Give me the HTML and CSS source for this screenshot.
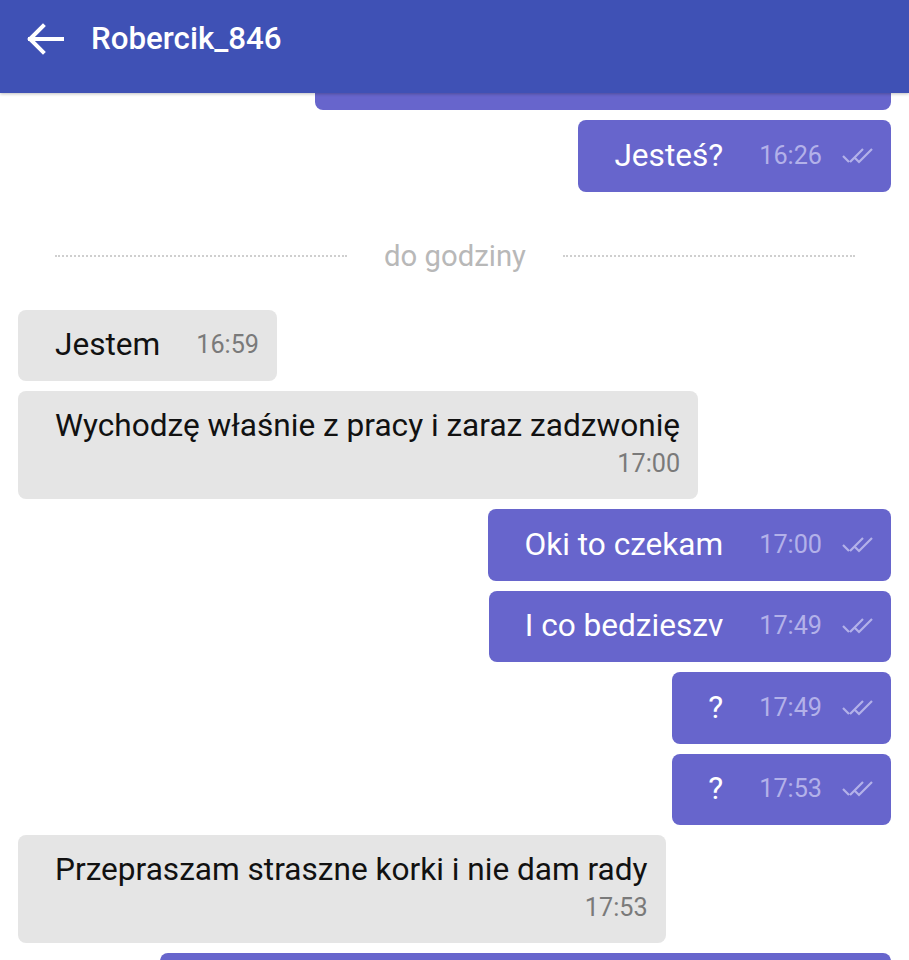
FILE: index.html
```html
<html>
<head>
    <meta charset="UTF-8">
    <meta name="viewport" content="width=device-width, initial-scale=1.0">
    <title>Robercik_846</title>
    <link rel="stylesheet" href="styles.css">
</head>

<body>
    <div class="topbar">
        <svg class="back" width="38" height="34" viewBox="0 0 38 34">
            <path d="M36 17H4M17 4L4 17l13 13" fill="none" stroke="white" stroke-width="4" stroke-linecap="square"/>
        </svg>
        <span class="title">Robercik_846</span>
    </div>

    <div id="messages">
        <div class="row out"><div class="bubble cut"></div></div>

        <div class="row out">
            <div class="bubble">
                <span class="text">Jesteś?</span>
                <span class="time">16:26</span>
                <svg class="ticks" width="32" height="18" viewBox="0 0 32 18"><path d="M2 9l6 6M9 15L22 2M14 11l4 4L31 2" fill="none" stroke="#b3b1e9" stroke-width="2.2"/></svg>
            </div>
        </div>

        <div class="divider">
            <span class="dots"></span>
            <span class="label">do godziny</span>
            <span class="dots"></span>
        </div>

        <div class="row in">
            <div class="bubble">
                <span class="text">Jestem</span>
                <span class="time">16:59</span>
            </div>
        </div>
        <div class="row in">
            <div class="bubble tall">
                <span class="text">Wychodzę właśnie z pracy i zaraz zadzwonię</span>
                <span class="time">17:00</span>
            </div>
        </div>

        <div class="row out">
            <div class="bubble">
                <span class="text">Oki to czekam</span>
                <span class="time">17:00</span>
                <svg class="ticks" width="32" height="18" viewBox="0 0 32 18"><path d="M2 9l6 6M9 15L22 2M14 11l4 4L31 2" fill="none" stroke="#b3b1e9" stroke-width="2.2"/></svg>
            </div>
        </div>
        <div class="row out">
            <div class="bubble">
                <span class="text">I co bedzieszv</span>
                <span class="time">17:49</span>
                <svg class="ticks" width="32" height="18" viewBox="0 0 32 18"><path d="M2 9l6 6M9 15L22 2M14 11l4 4L31 2" fill="none" stroke="#b3b1e9" stroke-width="2.2"/></svg>
            </div>
        </div>
        <div class="row out">
            <div class="bubble">
                <span class="text">?</span>
                <span class="time">17:49</span>
                <svg class="ticks" width="32" height="18" viewBox="0 0 32 18"><path d="M2 9l6 6M9 15L22 2M14 11l4 4L31 2" fill="none" stroke="#b3b1e9" stroke-width="2.2"/></svg>
            </div>
        </div>
        <div class="row out">
            <div class="bubble">
                <span class="text">?</span>
                <span class="time">17:53</span>
                <svg class="ticks" width="32" height="18" viewBox="0 0 32 18"><path d="M2 9l6 6M9 15L22 2M14 11l4 4L31 2" fill="none" stroke="#b3b1e9" stroke-width="2.2"/></svg>
            </div>
        </div>

        <div class="row in">
            <div class="bubble tall">
                <span class="text">Przepraszam straszne korki i nie dam rady</span>
                <span class="time">17:53</span>
            </div>
        </div>

        <div class="row out"><div class="bubble last"></div></div>
    </div>
</body>
</html>
```

FILE: styles.css
```css
body {
    margin: 0;
    background: white;
    font-family: Roboto, 'Noto Sans', sans-serif;
    height: 960px;
    overflow: hidden;
    display: flex;
    flex-direction: column;
}
.topbar {
    height: 93px;
    box-sizing: border-box;
    padding: 0 0 16px 26px;
    flex-shrink: 0;
    background: #3f51b5;
    display: flex;
    align-items: center;
    gap: 27px;
    color: white;
    position: relative;
    z-index: 2;
    box-shadow: 0 1px 3px rgba(0,0,0,.25);
}
.title {
    font-size: 31.3px;
    font-weight: 500;
}
#messages {
    flex: 1;
    overflow: hidden;
    display: flex;
    flex-direction: column;
    gap: 10px;
    padding: 0 18px;
}
.row {
    display: flex;
    flex-shrink: 0;
}
.row.out {
    justify-content: flex-end;
}
.bubble {
    border-radius: 8px;
    display: flex;
    align-items: center;
    padding: 16.75px 18px 16.75px 37px;
    line-height: 38px;
}
.out .bubble {
    background: #6765cc;
    color: white;
    padding-left: 36px;
}
.in .bubble {
    background: #e5e5e5;
    color: #111;
}
.bubble.cut {
    width: 576px;
    height: 40px;
    padding: 0;
    margin-top: -23px;
}
.bubble.last {
    width: 731px;
    height: 60px;
    padding: 0;
}
.text {
    font-size: 31.6px;
}
.time {
    font-size: 25.2px;
    margin-left: 36px;
}
.out .time {
    color: #b3b1e9;
}
.in .time {
    color: #7a7a7a;
}
.ticks {
    margin-left: 19px;
}
.bubble.tall {
    flex-direction: column;
    align-items: flex-end;
    padding: 16px 18px 16px 37px;
}
.bubble.tall .text {
    align-self: flex-start;
}
.bubble.tall .time {
    line-height: 38px;
}
.divider {
    display: flex;
    flex-shrink: 0;
    align-items: center;
    gap: 37px;
    box-sizing: border-box;
    height: 98px;
    padding: 11px 36px 0 37px;
}
.dots {
    flex: 1;
    border-top: 2px dotted #cfcfcf;
}
.label {
    color: #b8b8b8;
    font-size: 29.3px;
}
```
